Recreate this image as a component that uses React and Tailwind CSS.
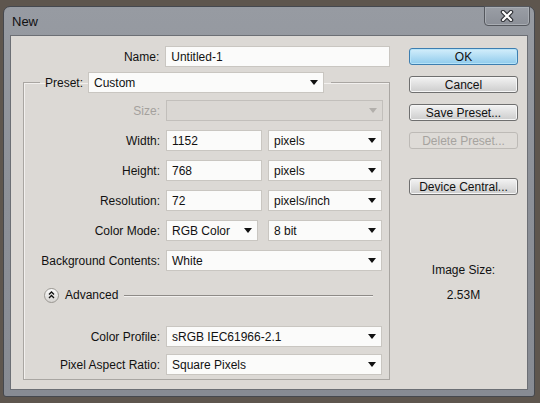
import React from 'react';

function Arrow({ disabled }) {
  return (
    <svg width="8" height="5" viewBox="0 0 8 5" className="shrink-0">
      <path d="M0 0 H8 L4 5 Z" fill={disabled ? '#b2afab' : '#111'} />
    </svg>
  );
}

function Field({ value, className = '' }) {
  return (
    <div className={`h-[21px] bg-[#fbfbfa] border border-[#c9c6c1] flex items-center pl-[5px] ${className}`}>
      {value}
    </div>
  );
}

function Select({ value, className = '', disabled = false }) {
  return (
    <div
      className={`h-[21px] border flex items-center justify-between pl-[5px] pr-[5px] ${
        disabled ? 'bg-[#dad7d3] border-[#c2bfbb]' : 'bg-[#fbfbfa] border-[#c9c6c1]'
      } ${className}`}
    >
      <span>{value}</span>
      <Arrow disabled={disabled} />
    </div>
  );
}

function Row({ label, children, muted = false }) {
  return (
    <div className="flex items-center gap-[6px]">
      <span className={`w-[136px] text-right ${muted ? 'text-[#a4a19d]' : ''}`}>{label}</span>
      {children}
    </div>
  );
}

function Btn({ children, primary, disabled, className = '' }) {
  return (
    <button
      className={`w-[109px] h-[17px] rounded-[3px] border flex items-center justify-center leading-none ${
        primary
          ? 'border-[#3d7eb0] bg-gradient-to-b from-[#d3eefb] to-[#8fcbec] shadow-[inset_0_0_0_1px_#b6e3f8]'
          : disabled
          ? 'border-[#bdbab6] bg-[#dedbd7] text-[#a6a39f]'
          : 'border-[#6f6f6f] bg-gradient-to-b from-[#f3f3f3] to-[#cdcdcd] shadow-[inset_0_0_0_1px_#f6f6f6]'
      } ${className}`}
    >
      {children}
    </button>
  );
}

export default function App() {
  return (
    <div className="w-[540px] h-[403px] bg-[#5e564e] pt-[6px] pl-[3px] pr-[5px] pb-[6px] font-['Liberation_Sans',Arial,sans-serif] text-[12px] text-[#111]">
      <div className="h-full flex flex-col rounded-t-[7px] rounded-b-[3px] border border-[#45484e] bg-gradient-to-b from-[#979ba2] via-[#8c9098] to-[#878b93]">
        {/* Title bar */}
        <div className="h-[28px] flex items-start justify-between pl-[8px] pr-[4px]">
          <span className="pt-[5px] text-[13px] text-[#111]">New</span>
          <div className="w-[46px] h-[20px] -mt-[1px] rounded-b-[4px] border border-[#54575d] shadow-[inset_0_0_0_1px_#a9adb3] bg-gradient-to-b from-[#9a9ea5] to-[#8b8f97] flex items-center justify-center">
            <svg width="14" height="12" viewBox="0 0 14 12">
              <path d="M3 2 L11 10 M11 2 L3 10" stroke="#2f3136" strokeWidth="4.5" strokeLinecap="round" />
              <path d="M3 2 L11 10 M11 2 L3 10" stroke="#fff" strokeWidth="2.2" strokeLinecap="round" />
            </svg>
          </div>
        </div>

        {/* Client */}
        <div className="flex-1 mx-[6px] mb-[6px] border border-[#6c6f75] bg-[#dcd9d5] flex">
          {/* Left column */}
          <div className="pl-[12px] pt-[10px] w-[379px]">
            <div className="flex items-center gap-[6px]">
              <span className="w-[137px] text-right">Name:</span>
              <Field value="Untitled-1" className="w-[226px]" />
            </div>

            <fieldset className="mt-[5px] m-0 p-0 border border-[#a9a6a2] shadow-[inset_1px_1px_0_#f2f0ee] w-[367px] pb-[4px]">
              <legend className="ml-[16px] pl-[5px] pr-[7px] p-0 flex items-center">
                <span className="w-[38px]">Preset:</span>
                <Select value="Custom" className="ml-[5px] w-[236px]" />
              </legend>

              <div className="pt-[7px] flex flex-col gap-[9px]">
                <Row label="Size:" muted>
                  <Select value="" disabled className="w-[217px]" />
                </Row>
                <Row label="Width:">
                  <Field value="1152" className="w-[96px]" />
                  <Select value="pixels" className="w-[114px]" />
                </Row>
                <Row label="Height:">
                  <Field value="768" className="w-[96px]" />
                  <Select value="pixels" className="w-[114px]" />
                </Row>
                <Row label="Resolution:">
                  <Field value="72" className="w-[96px]" />
                  <Select value="pixels/inch" className="w-[114px]" />
                </Row>
                <Row label="Color Mode:">
                  <Select value="RGB Color" className="w-[92px]" />
                  <Select value="8 bit" className="w-[114px] ml-[4px]" />
                </Row>
                <Row label="Background Contents:">
                  <Select value="White" className="w-[216px]" />
                </Row>
              </div>

              {/* Advanced */}
              <div className="flex items-center mt-[15px] pl-[20px] pr-[16px]">
                <div className="w-[15px] h-[15px] rounded-full border border-[#9a9792] bg-gradient-to-b from-[#fbfbfb] to-[#d6d4d1] flex items-center justify-center">
                  <svg width="7" height="8" viewBox="0 0 7 8">
                    <path d="M1 3.5 L3.5 1 L6 3.5 M1 7 L3.5 4.5 L6 7" stroke="#111" strokeWidth="1.3" fill="none" />
                  </svg>
                </div>
                <span className="ml-[6px]">Advanced</span>
                <div className="flex-1 ml-[6px] h-px bg-[#8e8b87] shadow-[0_1px_0_#f2f0ee]" />
              </div>

              <div className="mt-[22px] flex flex-col gap-[7px]">
                <Row label="Color Profile:">
                  <Select value="sRGB IEC61966-2.1" className="w-[216px]" />
                </Row>
                <Row label="Pixel Aspect Ratio:">
                  <Select value="Square Pixels" className="w-[216px]" />
                </Row>
              </div>
            </fieldset>
          </div>

          {/* Right column */}
          <div className="pl-[19px] pt-[12px] flex flex-col">
            <div className="flex flex-col gap-[11px]">
              <Btn primary>OK</Btn>
              <Btn>Cancel</Btn>
              <Btn>Save Preset...</Btn>
              <Btn disabled>Delete Preset...</Btn>
            </div>
            <Btn className="mt-[29px]">Device Central...</Btn>
            <div className="mt-[66px] w-[109px] flex flex-col items-center gap-[7px]">
              <span>Image Size:</span>
              <span>2.53M</span>
            </div>
          </div>
        </div>
      </div>
    </div>
  );
}
